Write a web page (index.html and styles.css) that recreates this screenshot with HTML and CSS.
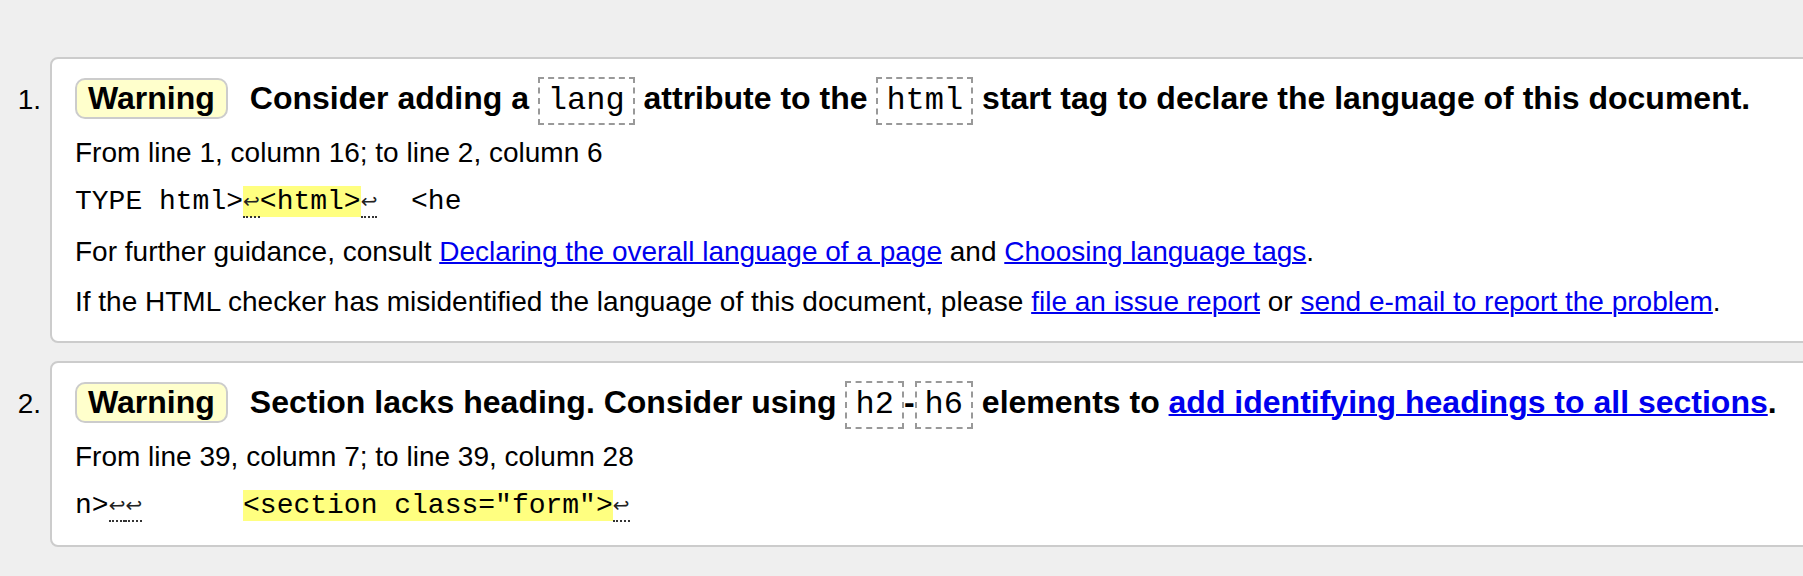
FILE: index.html
```html
<!DOCTYPE html>
<html lang="en">
<head>
<meta charset="utf-8">
<title>Checker messages</title>
<link rel="stylesheet" href="styles.css">
</head>
<body>
<ol class="messages">
  <li class="message">
    <span class="num">1.</span>
    <div class="card">
      <p class="head"><strong class="badge">Warning</strong><span>Consider adding a <code class="tag">lang</code> attribute to the <code class="tag">html</code> start tag to declare the language of this document.</span></p>
      <p class="loc">From line 1, column 16; to line 2, column 6</p>
      <p class="extract"><code>TYPE html&gt;<mark><span class="nl">↩</span>&lt;html&gt;</mark><span class="nl">↩</span>  &lt;he</code></p>
      <p>For further guidance, consult <a href="#">Declaring the overall language of a page</a> and <a href="#">Choosing language tags</a>.</p>
      <p>If the HTML checker has misidentified the language of this document, please <a href="#">file an issue report</a> or <a href="#">send e-mail to report the problem</a>.</p>
    </div>
  </li>
  <li class="message">
    <span class="num">2.</span>
    <div class="card">
      <p class="head"><strong class="badge">Warning</strong><span>Section lacks heading. Consider using <code class="tag">h2</code>-<code class="tag">h6</code> elements to <a href="#">add identifying headings to all sections</a>.</span></p>
      <p class="loc">From line 39, column 7; to line 39, column 28</p>
      <p class="extract"><code>n&gt;<span class="nl">↩</span><span class="nl">↩</span>      <mark>&lt;section class="form"&gt;</mark><span class="nl">↩</span></code></p>
    </div>
  </li>
</ol>
</body>
</html>
```
FILE: styles.css
```css
html, body {
  margin: 0;
  padding: 0;
  overflow: hidden;
}

body {
  background: #efefef;
  color: #000;
  font-family: "Liberation Sans", Arial, Helvetica, sans-serif;
  font-size: 28px;
  width: 1803px;
  height: 576px;
}

.messages {
  list-style: none;
  margin: 0;
  padding: 57px 0 0 0;
  display: flex;
  flex-direction: column;
  gap: 18px;
}

.message {
  display: flex;
  align-items: baseline;
}

.num {
  flex: none;
  width: 41px;
  padding-right: 9px;
  text-align: right;
  font-size: 28px;
}

.card {
  flex: none;
  width: 1780px;
  box-sizing: border-box;
  background: #fff;
  border: 2px solid #cccccc;
  border-radius: 8px;
  padding: 15px 23px 22px 23px;
  display: flex;
  flex-direction: column;
}

.card p {
  margin: 0;
  line-height: 34px;
}

.card p + p {
  margin-top: 16px;
}

.card .head + p {
  margin-top: 14px;
}

.card p.extract {
  margin-top: 15px;
}

.card .extract + p {
  margin-top: 16px;
}

.card .head {
  font-size: 32px;
  font-weight: bold;
  line-height: 48px;
  height: 48px;
  white-space: nowrap;
}

.badge {
  display: inline-block;
  line-height: 37px;
  padding: 0 11px;
  border: 2px solid #cccccc;
  border-radius: 10px;
  background: #ffffcc;
  margin-right: 22px;
}

.tag {
  display: inline-block;
  font-family: "Liberation Mono", "Courier New", monospace;
  font-weight: normal;
  font-size: 32px;
  line-height: 44px;
  padding: 0 8px;
  border: 2px dashed #999999;
}

a {
  color: #0000ee;
  text-decoration: underline;
  text-decoration-thickness: 2px;
}

.card .extract {
  font-family: "Liberation Mono", "Courier New", monospace;
  font-size: 28px;
  height: 34px;
}

.extract code {
  font-family: inherit;
  font-size: 28px;
  white-space: pre;
}

mark {
  background: #ffff80;
  color: inherit;
}

.nl {
  display: inline-block;
  vertical-align: top;
  width: 16.8px;
  height: 31px;
  line-height: 33px;
  font-family: "DejaVu Sans", sans-serif;
  font-size: 20px;
  color: #222;
  text-align: center;
  border-bottom: 2px dotted #333;
}
```
